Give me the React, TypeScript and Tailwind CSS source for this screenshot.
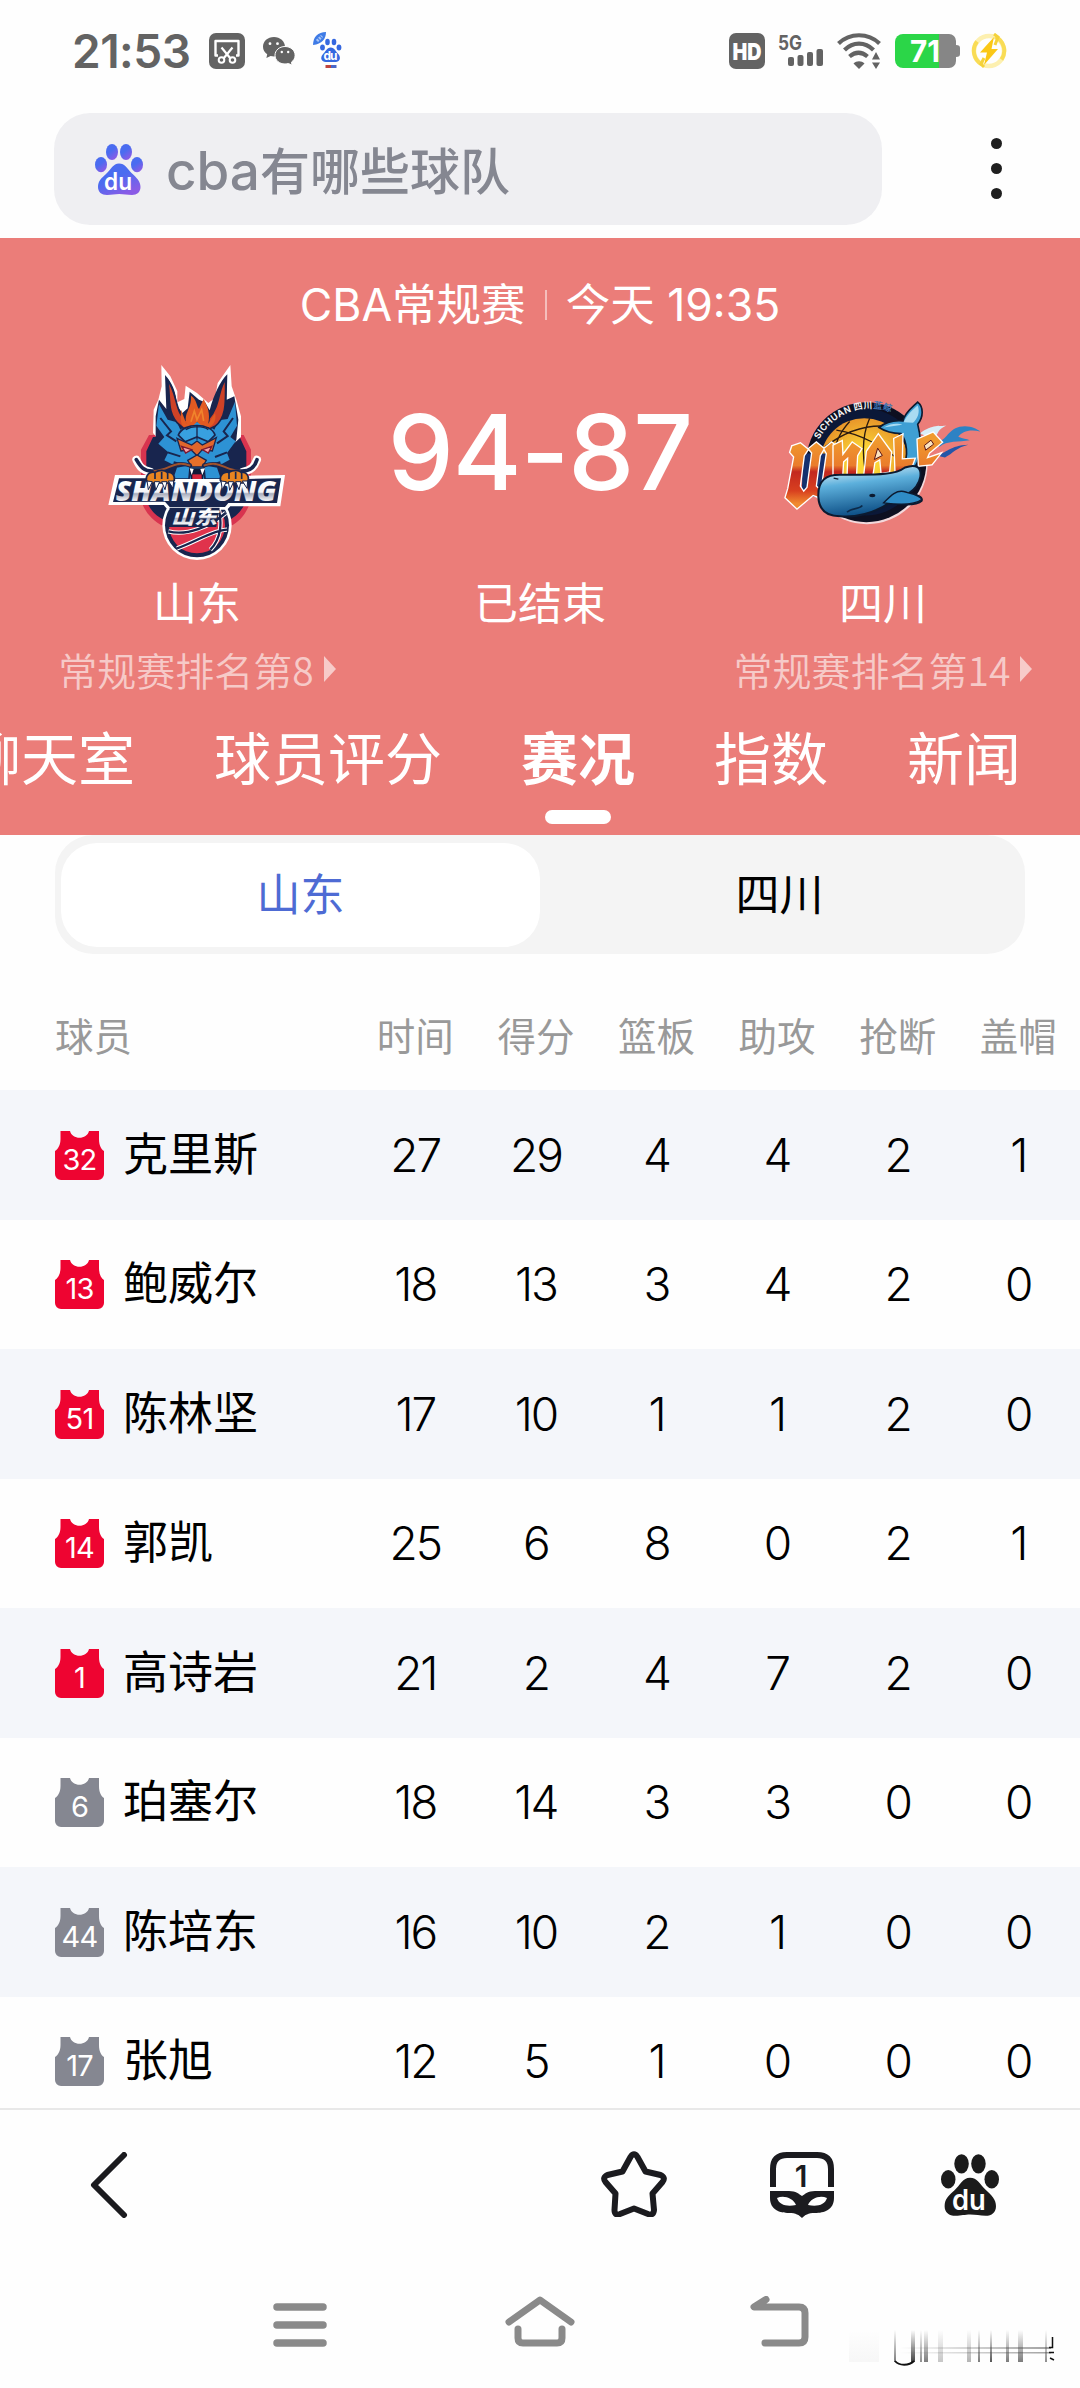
import { memo, useState } from "react";
import clsx from "clsx";

interface PlayerData {
  number: number;
  name: string;
  starter: boolean;
  stats: number[];
}

const columns = ["时间", "得分", "篮板", "助攻", "抢断", "盖帽"];

const tabs = ["聊天室", "球员评分", "赛况", "指数", "新闻"];

const teams = ["山东", "四川"];

const players: PlayerData[] = [
  { number: 32, name: "克里斯", starter: true, stats: [27, 29, 4, 4, 2, 1] },
  { number: 13, name: "鲍威尔", starter: true, stats: [18, 13, 3, 4, 2, 0] },
  { number: 51, name: "陈林坚", starter: true, stats: [17, 10, 1, 1, 2, 0] },
  { number: 14, name: "郭凯", starter: true, stats: [25, 6, 8, 0, 2, 1] },
  { number: 1, name: "高诗岩", starter: true, stats: [21, 2, 4, 7, 2, 0] },
  { number: 6, name: "珀塞尔", starter: false, stats: [18, 14, 3, 3, 0, 0] },
  { number: 44, name: "陈培东", starter: false, stats: [16, 10, 2, 1, 0, 0] },
  { number: 17, name: "张旭", starter: false, stats: [12, 5, 1, 0, 0, 0] },
];

const PawIcon = ({ className, fill, textFill = "#fff" }: { className?: string; fill: string; textFill?: string }) => (
  <svg viewBox="0 0 48 51" className={className}>
    <defs>
      <linearGradient id="paw-blue" x1="0" y1="0" x2="0.6" y2="1">
        <stop offset="0.5" stopColor="#4a6cf0" />
        <stop offset="1" stopColor="#8a5be6" />
      </linearGradient>
    </defs>
    <g fill={fill}>
      <ellipse cx="17" cy="8" rx="6" ry="8" />
      <ellipse cx="31" cy="8" rx="6" ry="8" />
      <ellipse cx="6" cy="20.7" rx="6" ry="7.6" />
      <ellipse cx="42" cy="20.7" rx="6" ry="7.6" />
      <path d="M24 19.5c6 0 8 5 12.500 9.500C42 34 45.500 37.500 45.500 43c0 5-3.500 8-8.500 8-5 0-8-1-12.800-1-4.700 0-7.200 1-12.200 1-5.500 0-9-3-9-8 0-6 3.500-9 8-13 5-4.500 7-10.500 13-10.500z" />
    </g>
    <text x="9" y="46" textLength="28" lengthAdjust="spacingAndGlyphs" fontSize="24" fontWeight="600" fontFamily="Inter, sans-serif" fill={textFill}>
      du
    </text>
  </svg>
);

const StatusBar = () => (
  <div className="flex h-[101px] items-center justify-between pl-[72px] pr-[73px]">
    <div className="flex items-center">
      <span className="w-[137px] text-[46px] font-semibold leading-[46px] tracking-[-0.5px] text-[#636363]">21:53</span>
      <svg viewBox="0 0 36 36" className="h-9 w-9">
        <rect width="36" height="36" rx="7" fill="#636363" />
        <path d="M9 22.500H6.500V8h23v14.500H27" fill="none" stroke="#fff" strokeWidth="2.400" strokeLinejoin="round" />
        <path d="M12.500 14.500l9 11M23.500 14.500l-9 11" stroke="#fff" strokeWidth="2.200" />
        <circle cx="12.500" cy="27" r="2.800" fill="none" stroke="#fff" strokeWidth="2" />
        <circle cx="23.500" cy="27" r="2.800" fill="none" stroke="#fff" strokeWidth="2" />
      </svg>
      <svg viewBox="0 0 32 28" className="ml-[18px] h-7 w-8">
        <path d="M11 0C4.500 0 0 4.300 0 9.700c0 3.200 1.600 5.800 4.200 7.600L3.400 21l4.200-2c1.200.3 2.300.4 3.500.4C17 19.400 22 15 22 9.700S17 0 11 0z" fill="#636363" />
        <path d="M22 9.500c-5.700 0-10 3.900-10 8.800 0 4.900 4.300 8.700 10 8.700 1.200 0 2.300-.2 3.400-.5l3.800 1.700-.8-3c2.300-1.600 3.700-4 3.700-6.900 0-4.900-4.400-8.800-10.100-8.800z" fill="#636363" stroke="#fff" strokeWidth="1" />
        <g fill="#fff">
          <circle cx="7" cy="6.700" r="1.400" />
          <circle cx="14.500" cy="6.700" r="1.400" />
          <circle cx="18.800" cy="15" r="1.200" />
          <circle cx="25.200" cy="15" r="1.200" />
        </g>
      </svg>
      <svg viewBox="0 0 30 37" className="ml-[18px] h-[37px] w-[30px]">
        <path d="M0 13C0 5 5 0 13 0c0 7-4 12-13 13z" fill="#3f7be6" />
        <path d="M4 9l5-5" stroke="#a9c6f7" strokeWidth="3" strokeDasharray="2 1" />
        <g fill="#3568e0">
          <ellipse cx="14.500" cy="10" rx="2.300" ry="3.200" />
          <ellipse cx="21" cy="10" rx="2.300" ry="3.200" />
          <ellipse cx="9.500" cy="15.500" rx="2.400" ry="3" />
          <ellipse cx="26" cy="15.500" rx="2.400" ry="3" />
          <path d="M17.700 15.500c4 0 5 4 8 7 2.500 3.500 1 7.500-3 7.500h-10c-4 0-6-4-3-7.500 3-3 4-7 8-7z" />
        </g>
        <text x="10.500" y="28" fontSize="12" fontWeight="700" fontFamily="Inter, sans-serif" fill="#fff" textLength="14">
          du
        </text>
        <path d="M12.500 34.500h6" stroke="#c0453f" strokeWidth="3" />
        <path d="M18 34.500h5.500" stroke="#4a67c8" strokeWidth="3" />
      </svg>
    </div>
    <div className="flex items-center">
      <svg viewBox="0 0 36 36" className="h-9 w-9">
        <rect width="36" height="36" rx="7" fill="#636363" />
        <text x="3.500" y="26.500" textLength="29" lengthAdjust="spacingAndGlyphs" fontSize="23" fontWeight="900" fontFamily="Inter, sans-serif" fill="#fff">
          HD
        </text>
      </svg>
      <svg viewBox="0 0 46 38" className="ml-[13px] h-[38px] w-[46px]">
        <text x="0" y="18" fontSize="20" fontWeight="700" fontFamily="Inter, sans-serif" fill="#636363" textLength="24" lengthAdjust="spacingAndGlyphs">
          5G
        </text>
        <g fill="#636363">
          <rect x="10" y="25" width="6" height="9" rx="2" />
          <rect x="19.500" y="23" width="6" height="11" rx="2" />
          <rect x="29" y="20" width="6" height="14" rx="2" />
          <rect x="38.500" y="17" width="6.500" height="17" rx="2" />
        </g>
      </svg>
      <svg viewBox="0 0 44 36" className="ml-[13px] h-9 w-11">
        <g fill="none" stroke="#636363" strokeWidth="4.200">
          <path d="M1.500 10.500C13-.5 31-.5 42.500 10.500" />
          <path d="M7.500 17C16 8.500 28 8.500 36.500 17" />
          <path d="M12.500 23.500c6-5 12-5 18 0" />
        </g>
        <path d="M16.500 30.500c3-3 8-3 11 0L22 36z" fill="#636363" />
        <path d="M39 19l4 7.500h-8zM39 36l4-6.500h-8z" fill="#636363" />
      </svg>
      <svg viewBox="0 0 65 34" className="ml-[14px] h-[34px] w-[65px]">
        <path d="M8 0h46a7 7 0 0 1 7 7v20a7 7 0 0 1-7 7H43V0z" fill="#868686" />
        <path d="M8 0h36v34H8a8 8 0 0 1-8-8V8a8 8 0 0 1 8-8z" fill="#2bd648" />
        <path d="M61 11c3 0 4 1 4 3v6c0 2-1 3-4 3z" fill="#868686" />
        <text x="15" y="28" fontSize="30" fontWeight="700" fontFamily="Inter, sans-serif" fill="#fff" textLength="30" lengthAdjust="spacingAndGlyphs">
          71
        </text>
      </svg>
      <svg viewBox="0 0 36 36" className="ml-[11px] h-9 w-9">
        <circle cx="18" cy="18" r="15" fill="none" stroke="#fdf0b0" strokeWidth="4.500" />
        <path d="M11 31.500A15.500 15.500 0 0 1 6 8.500M24 3.500a15.500 15.500 0 0 1 6.500 23" fill="none" stroke="#f9dc55" strokeWidth="4" />
        <path d="M23 1l4 3-3 8M13 34l-3-3 3-6" fill="none" stroke="#f5d23a" strokeWidth="3" />
        <path d="M23 4L9 19.500h7l-3 12.500 14-16h-6.500z" fill="#fbc816" />
      </svg>
    </div>
  </div>
);

const SearchBar = () => (
  <div className="flex h-[137px] items-start pl-[54px] pt-3">
    <div className="flex h-[112px] w-[828px] items-center rounded-[36px] bg-[#efeff2] pl-[41px]">
      <PawIcon className="h-[51px] w-12" fill="url(#paw-blue)" />
      <span className="ml-[23px] pt-[5px] text-[50px] font-medium leading-[56px] text-[#858791]">
        <span className="text-[53px]">cba</span>有哪些球队
      </span>
    </div>
    <div className="ml-[109px] flex h-[111px] flex-col items-center justify-center gap-[14px]">
      <span className="h-[11px] w-[11px] rounded-full bg-[#1f1f1f]" />
      <span className="h-[11px] w-[11px] rounded-full bg-[#1f1f1f]" />
      <span className="h-[11px] w-[11px] rounded-full bg-[#1f1f1f]" />
    </div>
  </div>
);

const ShandongLogo = () => (
  <svg viewBox="80 40 540 600" className="h-[200px] w-[180px]">
    <defs>
      <linearGradient id="sd-chrome" x1="0" y1="0" x2="0" y2="1">
        <stop offset="0.3" stopColor="#fff" />
        <stop offset="0.56" stopColor="#f4f4f8" />
        <stop offset="0.6" stopColor="#a9adbd" />
        <stop offset="0.78" stopColor="#f0f1f5" />
      </linearGradient>
    </defs>
    {/* shield */}
    <path d="M206 256H490L512 300V450C500 490 480 515 450 530L350 600 250 530C210 510 190 480 182 450V300z" fill="#d8344f" />
    <path d="M218 262H478L498 305V450C488 480 470 500 440 515L350 580 260 515C225 500 208 480 198 450V305z" fill="#18254e" />
    {/* white outline of the horns and mane */}
    <path d="M243 46L270 80 291 125V158L312 148 316 108 350 130 384 160 404 145 412 100 450 46 454 110 468 150 482 200V262L440 300H260L218 250 220 180 234 150 244 110z" fill="#fff" />
    <path d="M254 76C274 98 288 126 290 168L306 190 322 176 328 126 356 150 374 158 388 182C400 136 420 94 441 74L439 150 462 140 474 210 468 270 440 330H262L226 270 226 200 236 150 258 178z" fill="#18254e" />
    <path d="M236 164L262 210 290 218 300 240 330 218H372L402 240 415 212 442 208 464 156 470 228 450 262 466 275 440 310 448 330 412 350 396 390H304L288 350 252 332 264 308 234 282 252 262 228 228z" fill="#2d92d4" />
    <path d="M240 205l32 40-12 12 28 18M458 205l-28 40 12 14-32 22M262 308l38 12M440 308l-36 14M280 338l30 8M420 338l-30 8" fill="none" stroke="#18254e" strokeWidth="6" />
    {/* horns */}
    <path d="M260 88C274 130 254 190 298 226L314 240 320 214C284 194 292 130 260 88z" fill="#cf4227" stroke="#18254e" strokeWidth="5" />
    <path d="M436 88C412 120 420 170 386 206L382 240 404 230C444 200 434 140 436 88z" fill="#cf4227" stroke="#18254e" strokeWidth="5" />
    {/* flame */}
    <path d="M318 222C310 188 334 180 332 138 350 150 348 168 356 178L370 148C382 172 390 190 384 222L404 190C412 220 388 240 368 232L350 216 332 234C300 238 300 220 302 180z" fill="#e25a22" />
    <path d="M332 216l10-32 8 26 14-30 6 34" fill="none" stroke="#f0842c" strokeWidth="5" />
    {/* face */}
    <path d="M294 256C308 218 392 218 404 256L384 276 350 262 314 276z" fill="#38a0e0" stroke="#18254e" strokeWidth="5" />
    <path d="M350 228v42M316 240c20-12 50-12 68 0" fill="none" stroke="#18254e" strokeWidth="4" />
    <path d="M290 266L334 286 350 274 366 286 408 264 396 304 366 300 350 318 332 300 302 304z" fill="#e0662c" stroke="#18254e" strokeWidth="4" />
    <path d="M304 290l30 10-18 10zM394 290l-28 10 18 10z" fill="#f7a0a8" stroke="#7d1830" strokeWidth="4" />
    <path d="M322 332L350 316 378 332 366 352H334z" fill="#e5702a" stroke="#18254e" strokeWidth="4" />
    <path d="M330 344L288 352 276 388H326zM370 344L412 352 424 388H374z" fill="#2d92d4" stroke="#18254e" strokeWidth="5" />
    <path d="M326 356H374L368 388H332z" fill="#101a38" />
    <path d="M336 374H364V388H336z" fill="#d4253c" />
    <path d="M328 356l6 20 6-18M360 358l6 18 8-20" fill="#fff" />
    {/* whiskers */}
    <path d="M210 366C184 362 178 350 168 330M488 366C514 362 522 350 530 330" fill="none" stroke="#fff" strokeWidth="24" strokeLinecap="round" />
    <path d="M330 348C280 330 270 362 220 364 190 366 180 350 168 330M370 348C420 330 430 362 480 364 510 366 524 350 530 330" fill="none" stroke="#18254e" strokeWidth="11" strokeLinecap="round" />
    <path d="M330 348C280 330 270 362 220 364M370 348C420 330 430 362 480 364" fill="none" stroke="#a0522c" strokeWidth="6" />
    {/* ball */}
    <circle cx="350" cy="527" r="104" fill="#fff" />
    <circle cx="350" cy="527" r="96" fill="#18254e" />
    <circle cx="350" cy="527" r="84" fill="#e0334c" />
    <path d="M264 545C320 560 390 530 436 490M290 596C340 580 400 540 440 540M410 460C430 520 420 570 390 600" fill="none" stroke="#fff" strokeWidth="13" />
    <path d="M264 545C320 560 390 530 436 490M290 596C340 580 400 540 440 540M410 460C430 520 420 570 390 600" fill="none" stroke="#18254e" strokeWidth="7" />
    {/* name plate */}
    <path d="M104 376H206L230 388H470L500 378 614 376 600 470H450L440 480H262L250 466 84 466z" fill="#fff" />
    <path d="M116 386H204L230 398H472L500 388 602 386 590 460H444L434 472H268L254 456 98 457z" fill="#18254e" />
    <text x="106" y="455" fontSize="86" fontWeight="800" fontStyle="italic" fontFamily="'Open Sans', sans-serif" fill="url(#sd-chrome)" textLength="482" lengthAdjust="spacingAndGlyphs">
      SHANDONG
    </text>
    <path d="M268 474H418L408 532H262z" fill="#18254e" />
    <text x="272" y="523" fontSize="56" fontWeight="900" fontStyle="italic" fontFamily="'Noto Sans CJK SC', sans-serif" fill="url(#sd-chrome)" textLength="138" lengthAdjust="spacingAndGlyphs">
      山东
    </text>
    {/* paws */}
    {[196, 418].map((x) => (
      <g key={x} transform={`translate(${x} 362)`} stroke="#18254e" strokeWidth="5">
        <path d="M2 30C0 14 12 2 28 6 40-2 58-2 64 6 80 4 88 16 86 30L78 38H8z" fill="#e88420" />
        <path d="M28 6v20M48 4v22M66 8v18" fill="none" />
        <path d="M4 32l4 26 12-24zM26 34l4 26 12-26zM48 34l10 24 6-24zM68 32l14 22 2-22z" fill="#fff" strokeWidth="3" />
      </g>
    ))}
  </svg>
);

const SichuanLogo = () => (
  <svg viewBox="70 60 600 380" className="h-[127px] w-[200px]">
    <defs>
      <linearGradient id="sc-fire" gradientUnits="userSpaceOnUse" x1="0" y1="180" x2="0" y2="370">
        <stop offset="0" stopColor="#f09a2e" />
        <stop offset="0.4" stopColor="#ea7c2c" />
        <stop offset="0.5" stopColor="#c3281f" />
        <stop offset="0.8" stopColor="#d8401f" />
        <stop offset="1" stopColor="#f08a30" />
      </linearGradient>
      <linearGradient id="sc-body" x1="0" y1="0" x2="0.25" y2="1">
        <stop offset="0.05" stopColor="#e6f4fb" />
        <stop offset="0.4" stopColor="#5db0dc" />
        <stop offset="1" stopColor="#0d4f86" />
      </linearGradient>
      <radialGradient id="sc-ball">
        <stop offset="0.3" stopColor="#fbd636" />
        <stop offset="1" stopColor="#e8962a" />
      </radialGradient>
      <path id="sc-arc" d="M178 178A175 175 0 0 1 420 108" />
    </defs>
    <circle cx="322" cy="250" r="182" fill="#f3d9dc" />
    <circle cx="320" cy="246" r="180" fill="#0d0f20" />
    <circle cx="318" cy="246" r="160" fill="#0b1838" />
    <circle cx="314" cy="246" r="132" fill="url(#sc-ball)" />
    <path d="M196 200C260 150 330 130 400 140M230 150C300 160 380 200 440 260M330 114C300 180 310 260 330 330M270 124C200 200 220 280 250 330" fill="none" stroke="#2a1a10" strokeWidth="4" />
    <text fontSize="27" fontWeight="700" fontFamily="Inter, 'Noto Sans CJK SC', sans-serif" fill="#f2f2f2">
      <textPath href="#sc-arc" textLength="252">
        SICHUAN 四川<tspan fill="#3b75b5">蓝鲸</tspan>
      </textPath>
    </text>
    {/* trailing flames */}
    <path d="M480 160C520 130 540 140 560 136 530 150 540 160 520 175z" fill="#d9eef8" />
    <path d="M520 186C560 190 560 150 600 140 630 134 650 146 662 154 630 146 606 154 596 170 610 176 620 176 630 180 600 186 560 180 540 200z" fill="#2d82c4" />
    <path d="M530 226C560 220 570 196 626 194 590 202 580 220 556 232z" fill="#2456a8" />
    {/* tail */}
    <path d="M428 262C450 230 440 180 424 160 400 160 380 156 358 142 380 124 410 120 430 122 436 96 460 80 474 66 492 80 492 110 474 132 486 180 492 250 440 290z" fill="#3f9fd4" stroke="#0c1a30" strokeWidth="5" />
    <path d="M432 126C442 104 460 88 474 76 482 96 474 116 460 128zM372 142C396 128 416 130 428 134z" fill="#a9dbf2" />
    <path d="M130 220H230L200 350H126z" fill="#14306e" />
    <g fill="url(#sc-fire)" stroke="#fff" strokeWidth="8" paintOrder="stroke" strokeLinejoin="miter">
      <path d="M98 198L122 190 144 208 132 226 120 318 132 336 144 322 158 218 148 206 170 188 192 206 180 226 168 318 178 328 188 316 202 220 194 206 216 188 236 206 226 300C222 330 200 350 176 350L160 344 112 384 78 352 86 326 104 230 92 216z" />
      <path d="M222 196L246 184 248 228 278 188 304 206 292 226 288 296 264 296 266 230 250 244 246 304 222 312z" />
      <path d="M356 164L394 216 388 274 366 278 362 236 344 246 338 284 314 286 322 214z" />
      <path d="M404 176L428 164 426 238 464 236 456 258 408 276z" />
      <path d="M474 178L520 158 546 186 508 218 500 236 540 222 516 252 478 256z" />
    </g>
    <path d="M354 204l14 22-24 12zM494 196l20-16 8 12-24 18z" fill="#fbe3c0" stroke="#5a1616" strokeWidth="3" />
    {/* whale */}
    <path d="M176 350C174 300 200 284 240 284 320 282 400 290 436 262 470 250 486 262 482 290 478 312 462 330 446 340 470 344 490 348 486 362 470 378 410 374 392 366 350 398 280 414 240 408 200 408 178 390 176 350z" fill="url(#sc-body)" stroke="#0c1a30" strokeWidth="6" />
    <path d="M372 368C396 344 410 330 432 334 460 342 484 346 486 358 466 374 420 374 372 368z" fill="#2f8cc6" stroke="#0c1a30" strokeWidth="4" />
    <path d="M262 396C280 380 296 390 308 376" fill="none" stroke="#0c2a4a" strokeWidth="5" />
    <ellipse cx="338" cy="346" rx="9" ry="5" fill="#0c1a30" />
    <path d="M222 294l14 3" stroke="#0c1a30" strokeWidth="4" />
  </svg>
);

const RankLink = ({ rank }: { rank: number }) => (
  <div className="mt-[19px] flex h-11 items-center text-white/60">
    <span className="pt-[3px] font-['Noto_Sans_CJK_SC',sans-serif] text-[39px] font-[350] leading-[40px]">常规赛排名第{rank}</span>
    <svg viewBox="0 0 12 26" className="ml-2.5 mt-1 h-[26px] w-3">
      <path d="M0 0L12 13L0 26z" fill="currentColor" />
    </svg>
  </div>
);

const MatchHeader = () => {
  const [activeTab, setActiveTab] = useState<string>("赛况");

  return (
    <div className="h-[597px] overflow-hidden bg-[#eb7d79] pt-[45px] text-white">
      <div className="flex h-11 items-center justify-center whitespace-nowrap text-[44.5px] leading-[44px]">
        <span>CBA常规赛</span>
        <span className="mx-[19px] h-[30px] w-[2px] bg-white/50" />
        <span>今天 19:35</span>
      </div>
      <div className="mt-9 flex">
        <div className="flex w-[394px] flex-col items-center">
          <ShandongLogo />
          <span className="mt-[19px] text-[44px] leading-[44px]">山东</span>
          <RankLink rank={8} />
        </div>
        <div className="flex w-[292px] flex-col items-center">
          <span className="mt-[37px] whitespace-nowrap text-[105px] font-[550] leading-[104px] tracking-[-1px]">94-87</span>
          <span className="mt-[78px] text-[44px] leading-[44px]">已结束</span>
        </div>
        <div className="flex w-[394px] flex-col items-center">
          <div className="flex h-[200px] items-center">
            <SichuanLogo />
          </div>
          <span className="mt-[19px] text-[44px] leading-[44px]">四川</span>
          <RankLink rank={14} />
        </div>
      </div>
      <div className="-ml-9 mt-[41px] flex gap-[79px] whitespace-nowrap text-[57px] leading-[60px]">
        {tabs.map((tab) => (
          <button key={tab} onClick={() => setActiveTab(tab)} className={clsx("flex shrink-0 flex-col items-center", tab === activeTab && "font-bold")}>
            {tab}
            {tab === activeTab && <span className="mt-[20px] h-[14px] w-[66px] rounded-full bg-white" />}
          </button>
        ))}
      </div>
    </div>
  );
};

const TeamSwitch = () => {
  const [activeTeam, setActiveTeam] = useState<string>("山东");

  return (
    <div className="mx-[55px] flex h-[119px] rounded-[38px] bg-[#f4f4f4] px-[6px] pb-[7px] pt-2">
      {teams.map((team) => (
        <button
          key={team}
          onClick={() => setActiveTeam(team)}
          className={clsx("flex-1 rounded-[36px] text-[44px] leading-[44px]", team === activeTeam ? "bg-white text-[#4e6bd4]" : "text-black")}
        >
          {team}
        </button>
      ))}
    </div>
  );
};

const Jersey = ({ number, starter }: { number: number; starter: boolean }) => (
  <svg viewBox="0 0 49 49" className="mt-px h-[49px] w-[49px]">
    <path d="M5.500 0H15C17 9 32 9 34 0H44V8C44 14 46 18 49 20V43A6 6 0 0 1 43 49H6A6 6 0 0 1 0 43V20C3 18 5.500 14 5.500 8z" fill={starter ? "#ee0431" : "#858791"} />
    <text x="24.500" y="38.500" textAnchor="middle" fontSize="29" fontFamily="Inter, sans-serif" fill="#fff" letterSpacing="-0.8">
      {number}
    </text>
  </svg>
);

const PlayerRow = memo(({ player }: { player: PlayerData }) => (
  <div className="flex h-[129.5px] shrink-0 items-center odd:bg-[#f4f6fa]">
    <div className="flex w-[355px] items-center pl-[55px]">
      <Jersey number={player.number} starter={player.starter} />
      <span className="ml-[19px] text-[45px] leading-[48px]">{player.name}</span>
    </div>
    {player.stats.map((value, i) => (
      <span key={i} className="w-[120.6px] text-center text-[46px] font-[350] leading-[48px] tracking-[-2px]">
        {value}
      </span>
    ))}
  </div>
));

const BottomBar = () => (
  <div className="flex h-[152px] items-center border-t-2 border-[#e8e8e8] pl-[88px] pr-[81px]">
    <svg viewBox="0 0 40 66" className="h-[66px] w-10">
      <path d="M36 3L6 33L36 63" fill="none" stroke="#1b1b1f" strokeWidth="6" strokeLinecap="round" strokeLinejoin="round" />
    </svg>
    <svg viewBox="0 0 66 66" className="mb-[3px] ml-auto h-[66px] w-[66px]">
      <path
        d="M29.500 6Q33 .500 36.500 6L44.500 20.500L59.500 24Q65 26.500 61.500 31L51.500 42.500L53 59Q52.500 65 47 63L33 57.500L19 63Q13.500 65 13.500 59L14.500 42.500L4.500 31Q1 26.500 6.500 24L21.500 20.500z"
        fill="none"
        stroke="#1b1b1f"
        strokeWidth="6"
        strokeLinejoin="round"
      />
    </svg>
    <svg viewBox="0 0 64 66" className="ml-[103px] h-[66px] w-16">
      <path d="M3 35V17Q3 3 17 3H47Q61 3 61 17V35" fill="none" stroke="#1b1b1f" strokeWidth="6" />
      <text x="31" y="34.500" textAnchor="middle" fontSize="30" fontWeight="600" fontFamily="Inter, sans-serif" fill="#1b1b1f">
        1
      </text>
      <path d="M0 39H19C26 39 29 42 32 44C35 42 38 39 45 39H64V46C64 58 54 61 45 61C38 61 35 63 32 66C29 63 26 61 19 61C10 61 0 58 0 46z" fill="#1b1b1f" />
      <path d="M7 46C14 43 23 46 26 53C17 55 9 53 7 46zM57 46C50 43 41 46 38 53C47 55 55 53 57 46z" fill="#fff" />
    </svg>
    <PawIcon className="ml-[107px] h-[62px] w-[58px]" fill="#1b1b1b" />
  </div>
);

const NavBar = () => (
  <div className="flex h-[128px] items-start pl-[273px] pt-[36px]">
    <svg viewBox="0 0 54 52" className="h-[52px] w-[54px]">
      <path d="M4 11H50M4 29H50M4 47H50" stroke="#8a8a8a" strokeWidth="7.500" strokeLinecap="round" />
    </svg>
    <svg viewBox="0 0 70 52" className="ml-[178px] h-[52px] w-[70px]">
      <g fill="none" stroke="#8a8a8a" strokeWidth="7" strokeLinecap="round" strokeLinejoin="round">
        <path d="M4 26L35 4L66 26" />
        <path d="M13 33V42Q13 47 18 47H52Q57 47 57 42V33" />
      </g>
    </svg>
    <svg viewBox="0 0 60 52" className="ml-[175px] h-[52px] w-[60px]">
      <path d="M16 3.500L4 11H49Q55 11 55 17V41Q55 47 49 47H15" fill="none" stroke="#8a8a8a" strokeWidth="7" strokeLinecap="round" strokeLinejoin="round" />
    </svg>
    {/* smudged signature in the corner */}
    <svg viewBox="0 0 230 40" className="ml-[15px] mt-[34px] h-10 w-[230px]">
      <defs>
        <linearGradient id="smear" x1="0" y1="0" x2="0" y2="1">
          <stop offset="0" stopColor="#444" stopOpacity="0" />
          <stop offset="1" stopColor="#444" />
        </linearGradient>
        <linearGradient id="smear-x" x1="0" y1="0" x2="1" y2="0">
          <stop offset="0.3" stopColor="#444" stopOpacity="0" />
          <stop offset="1" stopColor="#444" />
        </linearGradient>
      </defs>
      <g fill="url(#smear)">
        <rect x="69" y="0" width="2" height="32" opacity="0.7" />
        <rect x="86" y="0" width="4" height="32" />
        <rect x="95" y="0" width="2" height="32" opacity="0.6" />
        <rect x="99" y="0" width="4" height="32" opacity="0.7" />
        <rect x="113" y="0" width="5" height="32" opacity="0.3" />
        <rect x="142" y="0" width="4" height="32" opacity="0.4" />
        <rect x="153" y="0" width="2" height="32" opacity="0.7" />
        <rect x="165" y="0" width="2" height="32" opacity="0.9" />
        <rect x="181" y="0" width="3" height="32" opacity="0.7" />
        <rect x="193" y="0" width="5" height="32" opacity="0.7" />
        <rect x="220" y="0" width="2" height="32" opacity="0.6" />
        <rect x="24" y="0" width="30" height="32" opacity="0.04" />
      </g>
      <rect x="10" y="17" width="216" height="2" fill="url(#smear-x)" opacity="0.5" />
      <rect x="10" y="22" width="216" height="1.500" fill="url(#smear-x)" opacity="0.5" />
      <path d="M70 31C74 36 84 36 89 31" fill="none" stroke="#111" strokeWidth="2" />
      <path d="M224 17.500H227.500V7M224 22.500H229M225 28l4 2" fill="none" stroke="#111" strokeWidth="1.500" />
    </svg>
  </div>
);

const App: React.FC = () => {
  return (
    <div className="flex h-[2388px] w-[1080px] flex-col overflow-hidden bg-[#fefefe] font-[Inter,'Noto_Sans_CJK_SC',sans-serif] text-black">
      <StatusBar />
      <SearchBar />
      <MatchHeader />
      <TeamSwitch />
      <div className="flex h-[136px] shrink-0 items-center pt-[30px] text-[38.5px] leading-[40px] text-[#999]">
        <span className="w-[355px] pl-[55px]">球员</span>
        {columns.map((column) => (
          <span key={column} className="w-[120.6px] text-center">
            {column}
          </span>
        ))}
      </div>
      <div className="flex h-[1018px] shrink-0 flex-col overflow-hidden">
        {players.map((player) => (
          <PlayerRow key={player.number} player={player} />
        ))}
      </div>
      <BottomBar />
      <NavBar />
    </div>
  );
};

export default App;
